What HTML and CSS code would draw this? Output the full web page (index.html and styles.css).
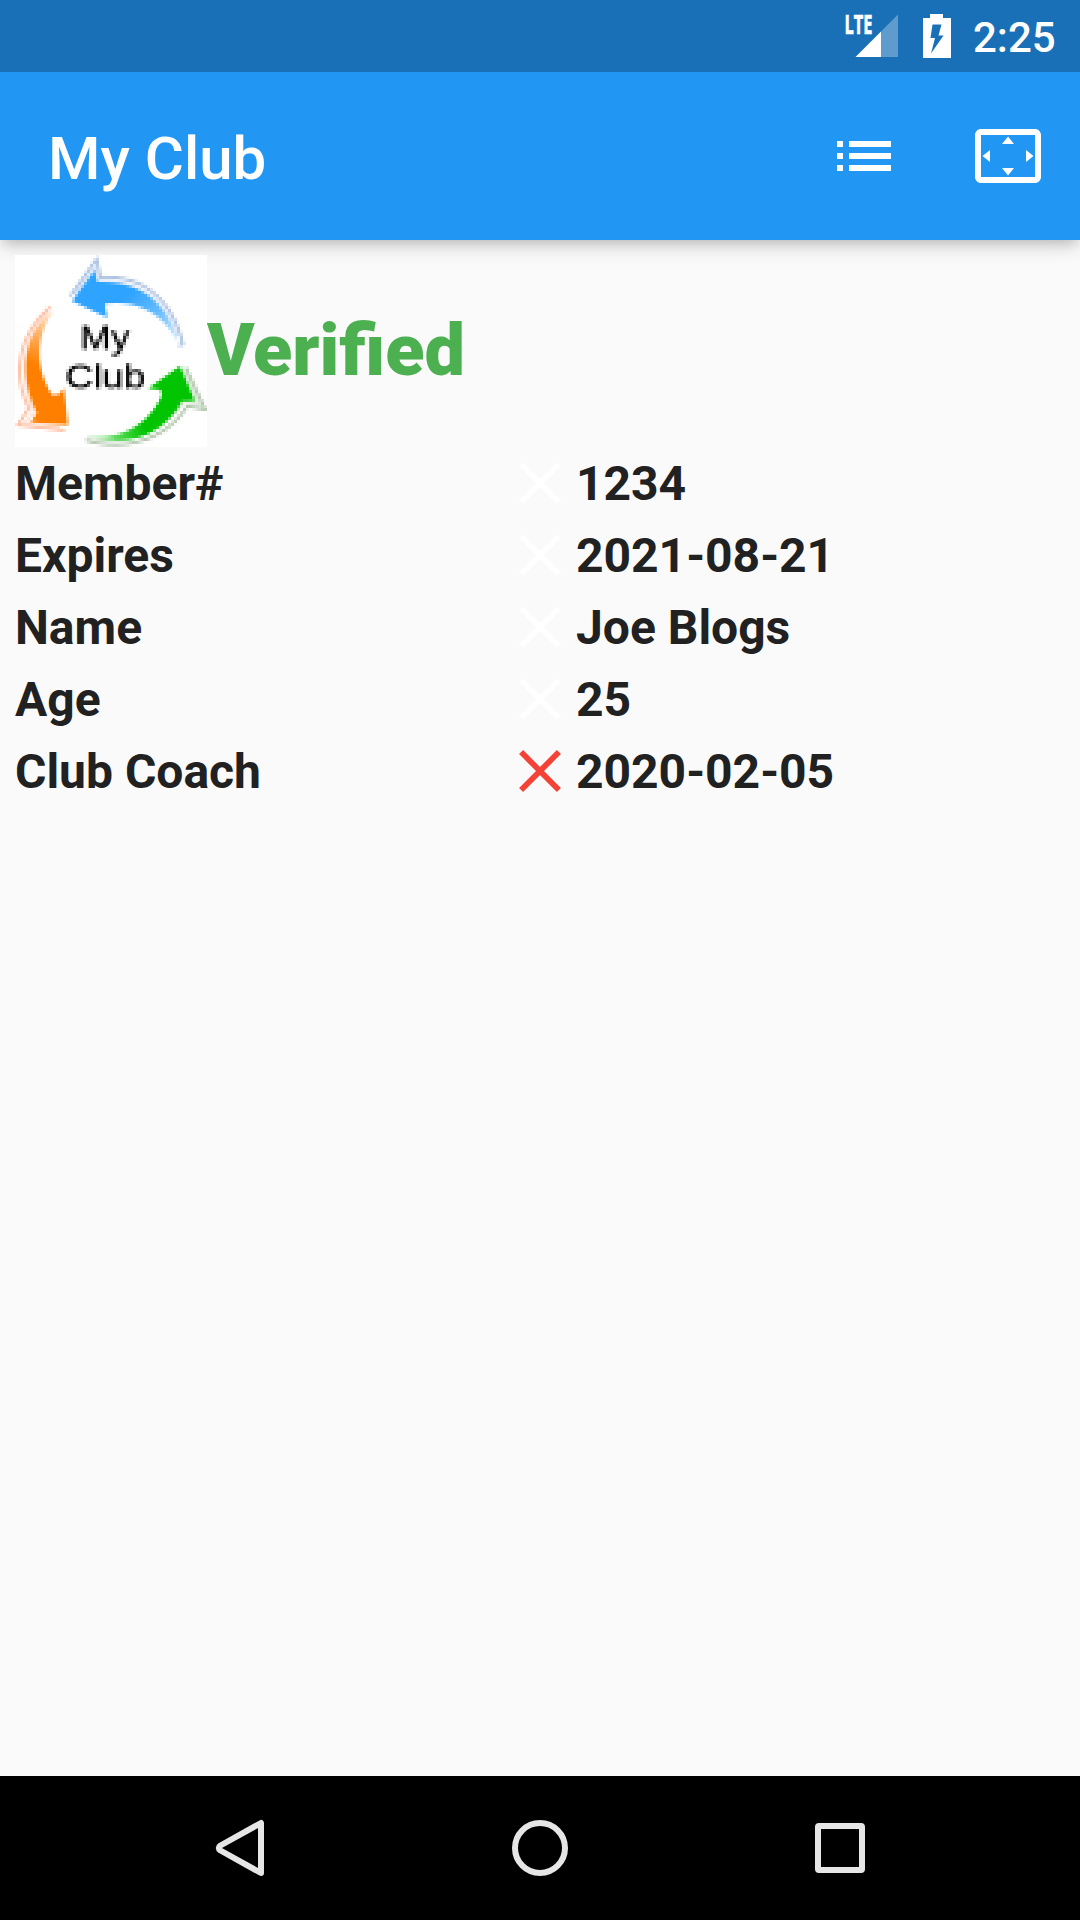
FILE: index.html
```html
<!DOCTYPE html>
<html lang="en">
<head>
<meta charset="utf-8">
<title>My Club</title>
<link rel="stylesheet" href="styles.css">
</head>
<body>
<div class="screen">
  <div class="status-bar">
    <svg class="signal" width="60" height="60" viewBox="839 6 60 60">
      <text class="lte" x="844.5" y="33.5" textLength="28" lengthAdjust="spacingAndGlyphs">LTE</text>
      <path d="M855.5 57L881 31.5V57Z" fill="#fff"/>
      <path d="M881 31.5L898 14.5V57H881Z" fill="#fff" fill-opacity=".3"/>
    </svg>
    <svg class="battery" width="28" height="44" viewBox="923 14 28 44">
      <path fill="#fff" fill-rule="evenodd" d="M930 14h13v4h8v40h-28V18h7zM932.5 24.5L930.5 38H935L931 53.5L943.5 35.5H938.5L941.5 24.5Z"/>
    </svg>
    <span class="time">2:25</span>
  </div>
  <header class="app-bar">
    <h1 class="title">My Club</h1>
    <svg class="action" viewBox="0 0 24 24" fill="#fff"><path d="M3 13h2v-2H3v2zm0 4h2v-2H3v2zm0-8h2V7H3v2zm4 4h14v-2H7v2zm0 4h14v-2H7v2zM7 7v2h14V7H7z"/></svg>
    <svg class="action" viewBox="0 0 24 24" fill="#fff"><path d="M12.01 5.5L10 8h4l-1.99-2.5zM18 10v4l2.5-1.99L18 10zM6 10l-2.5 2.01L6 14v-4zm8 6h-4l2.01 2.5L14 16zm7-13H3c-1.1 0-2 .9-2 2v14c0 1.1.9 2 2 2h18c1.1 0 2-.9 2-2V5c0-1.1-.9-2-2-2zm0 16.01H3V4.99h18v14.02z"/></svg>
  </header>
  <main class="content">
    <div class="badge">
      <svg class="logo" viewBox="45 75 576 576">
        <defs>
          <linearGradient id="blue" gradientUnits="userSpaceOnUse" x1="390" y1="190" x2="540" y2="350"><stop offset="0" stop-color="#2ea3ff"/><stop offset=".45" stop-color="#67bcff"/><stop offset="1" stop-color="#e4f4ff"/></linearGradient>
          <linearGradient id="orange" gradientUnits="userSpaceOnUse" x1="95" y1="400" x2="160" y2="230"><stop offset="0" stop-color="#ff8000"/><stop offset=".45" stop-color="#ffac59"/><stop offset="1" stop-color="#fff4e8"/></linearGradient>
          <linearGradient id="green" gradientUnits="userSpaceOnUse" x1="430" y1="580" x2="255" y2="620"><stop offset="0" stop-color="#00c400"/><stop offset=".5" stop-color="#5ada5a"/><stop offset="1" stop-color="#edffed"/></linearGradient>
          <!-- averages 3x3 blocks into one flat cell -->
          <filter id="cells" filterUnits="userSpaceOnUse" primitiveUnits="userSpaceOnUse" x="0" y="0" width="192" height="192" color-interpolation-filters="sRGB">
            <feConvolveMatrix in="SourceGraphic" order="3" kernelMatrix="1 1 1 1 1 1 1 1 1" edgeMode="duplicate" result="mean"/>
            <feFlood x="1" y="1" width="1" height="1" flood-color="#000" result="dot"/>
            <feComposite in="dot" in2="dot" operator="over" x="0" y="0" width="3" height="3"/>
            <feTile result="grid"/>
            <feComposite in="mean" in2="grid" operator="in"/>
            <feMorphology operator="dilate" radius="1"/>
          </filter>
        </defs>
        <path fill="#fff" d="M45 75h576v576H45z"/>
        <g fill="none" stroke-width="8">
          <path stroke="#a9bfdf" d="M211 198L290 87L301 142C420 134 515 200 549 343L535 347"/>
          <path stroke="#dce6f3" d="M225 191L285 113L294 153C410 150 495 205 532 318"/>
          <path stroke="#ffbca0" d="M151 231C55 315 35 430 86 535L54 585L194 601"/>
          <path stroke="#ffdfd2" d="M145 246C65 330 55 435 101 547L75 579L180 591"/>
          <path stroke="#dae6d7" d="M262 623C370 645 480 620 552 513L599 525L551 420"/>
          <path stroke="#aec4a8" d="M257 631C365 663 493 637 562 528L616 539L557 412"/>
        </g>
        <path fill="url(#blue)" d="M216 213L284 121L292 156C418 151 505 213 540 355C500 252 410 207 314 222L322 263Z"/>
        <path fill="url(#orange)" d="M166 237C115 297 95 400 157 496L178 492L192 474L204 585L92 577L111 549C61 453 58 310 166 237Z"/>
        <path fill="url(#green)" d="M254 614C352 635 442 590 485 497L482 480L445 475L540 408L585 513L546 514C490 617 378 659 254 614Z"/>
        <text class="logo-text" x="240" y="356" textLength="149" lengthAdjust="spacingAndGlyphs">My</text>
        <text class="logo-text" x="196" y="475" textLength="240" lengthAdjust="spacingAndGlyphs">Club</text>
      </svg>
      <span class="verified">Verified</span>
    </div>
    <div class="row"><span>Member#</span><svg class="mark" viewBox="0 0 24 24"><path d="M5.7 5.7L18.3 18.3M18.3 5.7L5.7 18.3"/></svg><span>1234</span></div>
    <div class="row"><span>Expires</span><svg class="mark" viewBox="0 0 24 24"><path d="M5.7 5.7L18.3 18.3M18.3 5.7L5.7 18.3"/></svg><span>2021-08-21</span></div>
    <div class="row"><span>Name</span><svg class="mark" viewBox="0 0 24 24"><path d="M5.7 5.7L18.3 18.3M18.3 5.7L5.7 18.3"/></svg><span>Joe Blogs</span></div>
    <div class="row"><span>Age</span><svg class="mark" viewBox="0 0 24 24"><path d="M5.7 5.7L18.3 18.3M18.3 5.7L5.7 18.3"/></svg><span>25</span></div>
    <div class="row"><span>Club Coach</span><svg class="mark failed" viewBox="0 0 24 24"><path d="M5.7 5.7L18.3 18.3M18.3 5.7L5.7 18.3"/></svg><span>2020-02-05</span></div>
  </main>
  <nav class="nav-bar">
    <svg viewBox="-36 -36 72 72"><path d="M21 -25V25L-19.5 2.5Q-23 0 -19.5 -2.5Z"/></svg>
    <svg viewBox="-36 -36 72 72"><circle r="25"/></svg>
    <svg viewBox="-36 -36 72 72"><rect x="-22" y="-22" width="44" height="44" rx="1"/></svg>
  </nav>
</div>
</body>
</html>
```
FILE: styles.css
```css
* { box-sizing: border-box; }
body { margin: 0; font-family: Roboto, sans-serif; }
svg { display: block; flex: none; }
.screen {
  width: 1080px;
  height: 1920px;
  display: flex;
  flex-direction: column;
  background: #fafafa;
  overflow: hidden;
}
.status-bar {
  position: relative;
  z-index: 1;
  height: 72px;
  flex: none;
  display: flex;
  align-items: center;
  justify-content: flex-end;
  padding-right: 24px;
  background: #1a70b7;
  color: #fff;
}
.battery { margin: 0 22px 0 24px; }
.time {
  width: 83px;
  font-size: 42px;
  font-weight: 500;
  line-height: 48px;
  padding-top: 3px;
  white-space: nowrap;
}
.lte { font: bold 26px "Open Sans", sans-serif; fill: #fff; stroke: #fff; stroke-width: .7px; }
.app-bar {
  height: 168px;
  flex: none;
  display: flex;
  align-items: center;
  gap: 72px;
  padding: 0 36px 0 48px;
  background: #2196f3;
  box-shadow: 0 6px 12px -3px rgba(0, 0, 0, .2), 0 12px 15px rgba(0, 0, 0, .05), 0 3px 30px rgba(0, 0, 0, .04);
}
.title {
  flex: 1;
  margin: 0;
  padding-top: 6px;
  color: #fff;
  font-size: 60px;
  font-weight: 500;
  line-height: 70px;
}
.action { width: 72px; height: 72px; }
.content { flex: 1; padding: 15px; }
.badge { display: flex; align-items: center; }
.logo { width: 192px; height: 192px; filter: url(#cells); }
.logo-text { font: 102px "Liberation Sans", sans-serif; fill: #000; stroke: #000; stroke-width: 1px; }
.verified {
  color: #4caf50;
  font-size: 72px;
  font-weight: 900;
  line-height: 84px;
}
.row {
  display: grid;
  grid-template-columns: 1fr 72px 1fr;
  height: 72px;
  align-items: center;
  color: #212121;
  font-size: 48px;
  font-weight: 700;
  line-height: 56px;
}
.row span { padding-top: 2px; }
.mark { width: 72px; height: 72px; fill: none; stroke: #fff; stroke-width: 1.9; }
.failed { stroke: #f44336; }
.nav-bar {
  height: 144px;
  flex: none;
  display: flex;
  align-items: center;
  justify-content: center;
  gap: 228px;
  background: #000;
}
.nav-bar svg { width: 72px; height: 72px; fill: none; stroke: #e6e6e6; stroke-width: 6; stroke-linejoin: round; }
```
